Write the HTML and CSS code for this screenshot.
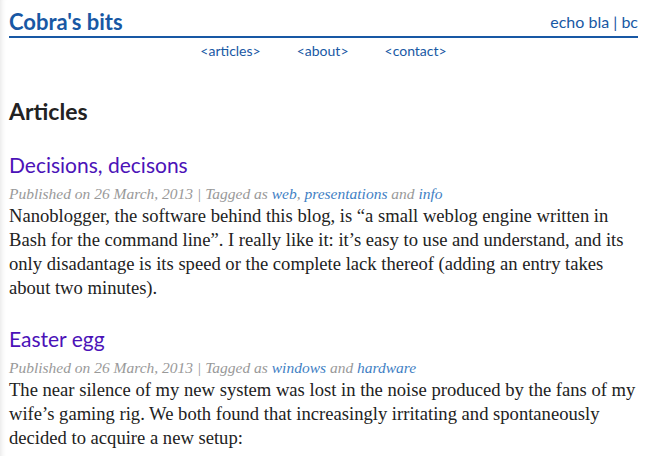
FILE: index.html
```html
<!DOCTYPE html>
<html lang="en">
<head>
    <meta charset="UTF-8">
    <meta name="viewport" content="width=device-width, initial-scale=1.0">
    <title>Cobra's bits</title>
    <link rel="stylesheet" href="styles.css">
</head>
<body>
    <div class="page">
        <div class="header">
            <a class="site-title" href="#">Cobra's bits</a>
            <div class="tagline"><a href="#">echo bla</a> <span class="pipe">|</span> <a href="#">bc</a></div>
        </div>
        <div class="nav">
            <a href="#">&lt;articles&gt;</a>
            <a href="#">&lt;about&gt;</a>
            <a href="#">&lt;contact&gt;</a>
        </div>

        <h1>Articles</h1>

        <div class="entry">
            <h2><a href="#">Decisions, decisons</a></h2>
            <div class="meta">Published on 26 March, 2013 | Tagged as <a href="#">web</a>, <a href="#">presentations</a> and <a href="#">info</a></div>
            <p>Nanoblogger, the software behind this blog, is &ldquo;a small weblog engine written in Bash for the command line&rdquo;. I really like it: it&rsquo;s easy to use and understand, and its only disadantage is its speed or the complete lack thereof (adding an entry takes about two minutes).</p>
        </div>

        <div class="entry">
            <h2><a href="#">Easter egg</a></h2>
            <div class="meta">Published on 26 March, 2013 | Tagged as <a href="#">windows</a> and <a href="#">hardware</a></div>
            <p>The near silence of my new system was lost in the noise produced by the fans of my wife&rsquo;s gaming rig. We both found that increasingly irritating and spontaneously decided to acquire a new setup:</p>
        </div>
    </div>
</body>
</html>
```

FILE: styles.css
```css
body, html {
    margin: 0;
    padding: 0;
    background: #fff;
}

body {
    box-shadow: inset 6px 0 6px -6px rgba(0, 0, 0, 0.15);
    min-height: 456px;
}

.page {
    padding: 0 8px 0 9px;
    font-family: "Liberation Serif", serif;
    color: #222;
}

a {
    text-decoration: none;
}

.header {
    display: flex;
    justify-content: space-between;
    align-items: flex-end;
    border-bottom: 2px solid #1858a4;
    padding-top: 6px;
    height: 30px;
    box-sizing: content-box;
}

.site-title {
    font-family: Lato, sans-serif;
    font-weight: bold;
    font-size: 22px;
    color: #1858a4;
    line-height: 28px;
}

.tagline {
    font-family: Lato, sans-serif;
    font-size: 16px;
    line-height: 28px;
    color: #1858a4;
}

.tagline a {
    color: #1858a4;
}

.nav {
    display: flex;
    justify-content: center;
    gap: 36px;
    font-family: Lato, sans-serif;
    font-size: 14px;
    line-height: 22px;
    margin-top: 2px;
}

.nav a {
    color: #1858a4;
}

h1 {
    font-family: Lato, sans-serif;
    font-weight: bold;
    font-size: 23px;
    line-height: 30px;
    color: #222;
    margin: 34px 0 24px;
}

.entry {
    margin-bottom: 24px;
}

h2 {
    font-family: Lato, sans-serif;
    font-weight: normal;
    font-size: 21px;
    line-height: 30px;
    margin: 0 0 4px;
}

h2 a {
    color: #4b12b8;
}

.meta {
    font-style: italic;
    font-size: 15.5px;
    line-height: 20px;
    color: #999;
}

.meta a {
    color: #3f7fc4;
}

p {
    font-size: 18.6px;
    line-height: 24px;
    margin: 0;
}
```
